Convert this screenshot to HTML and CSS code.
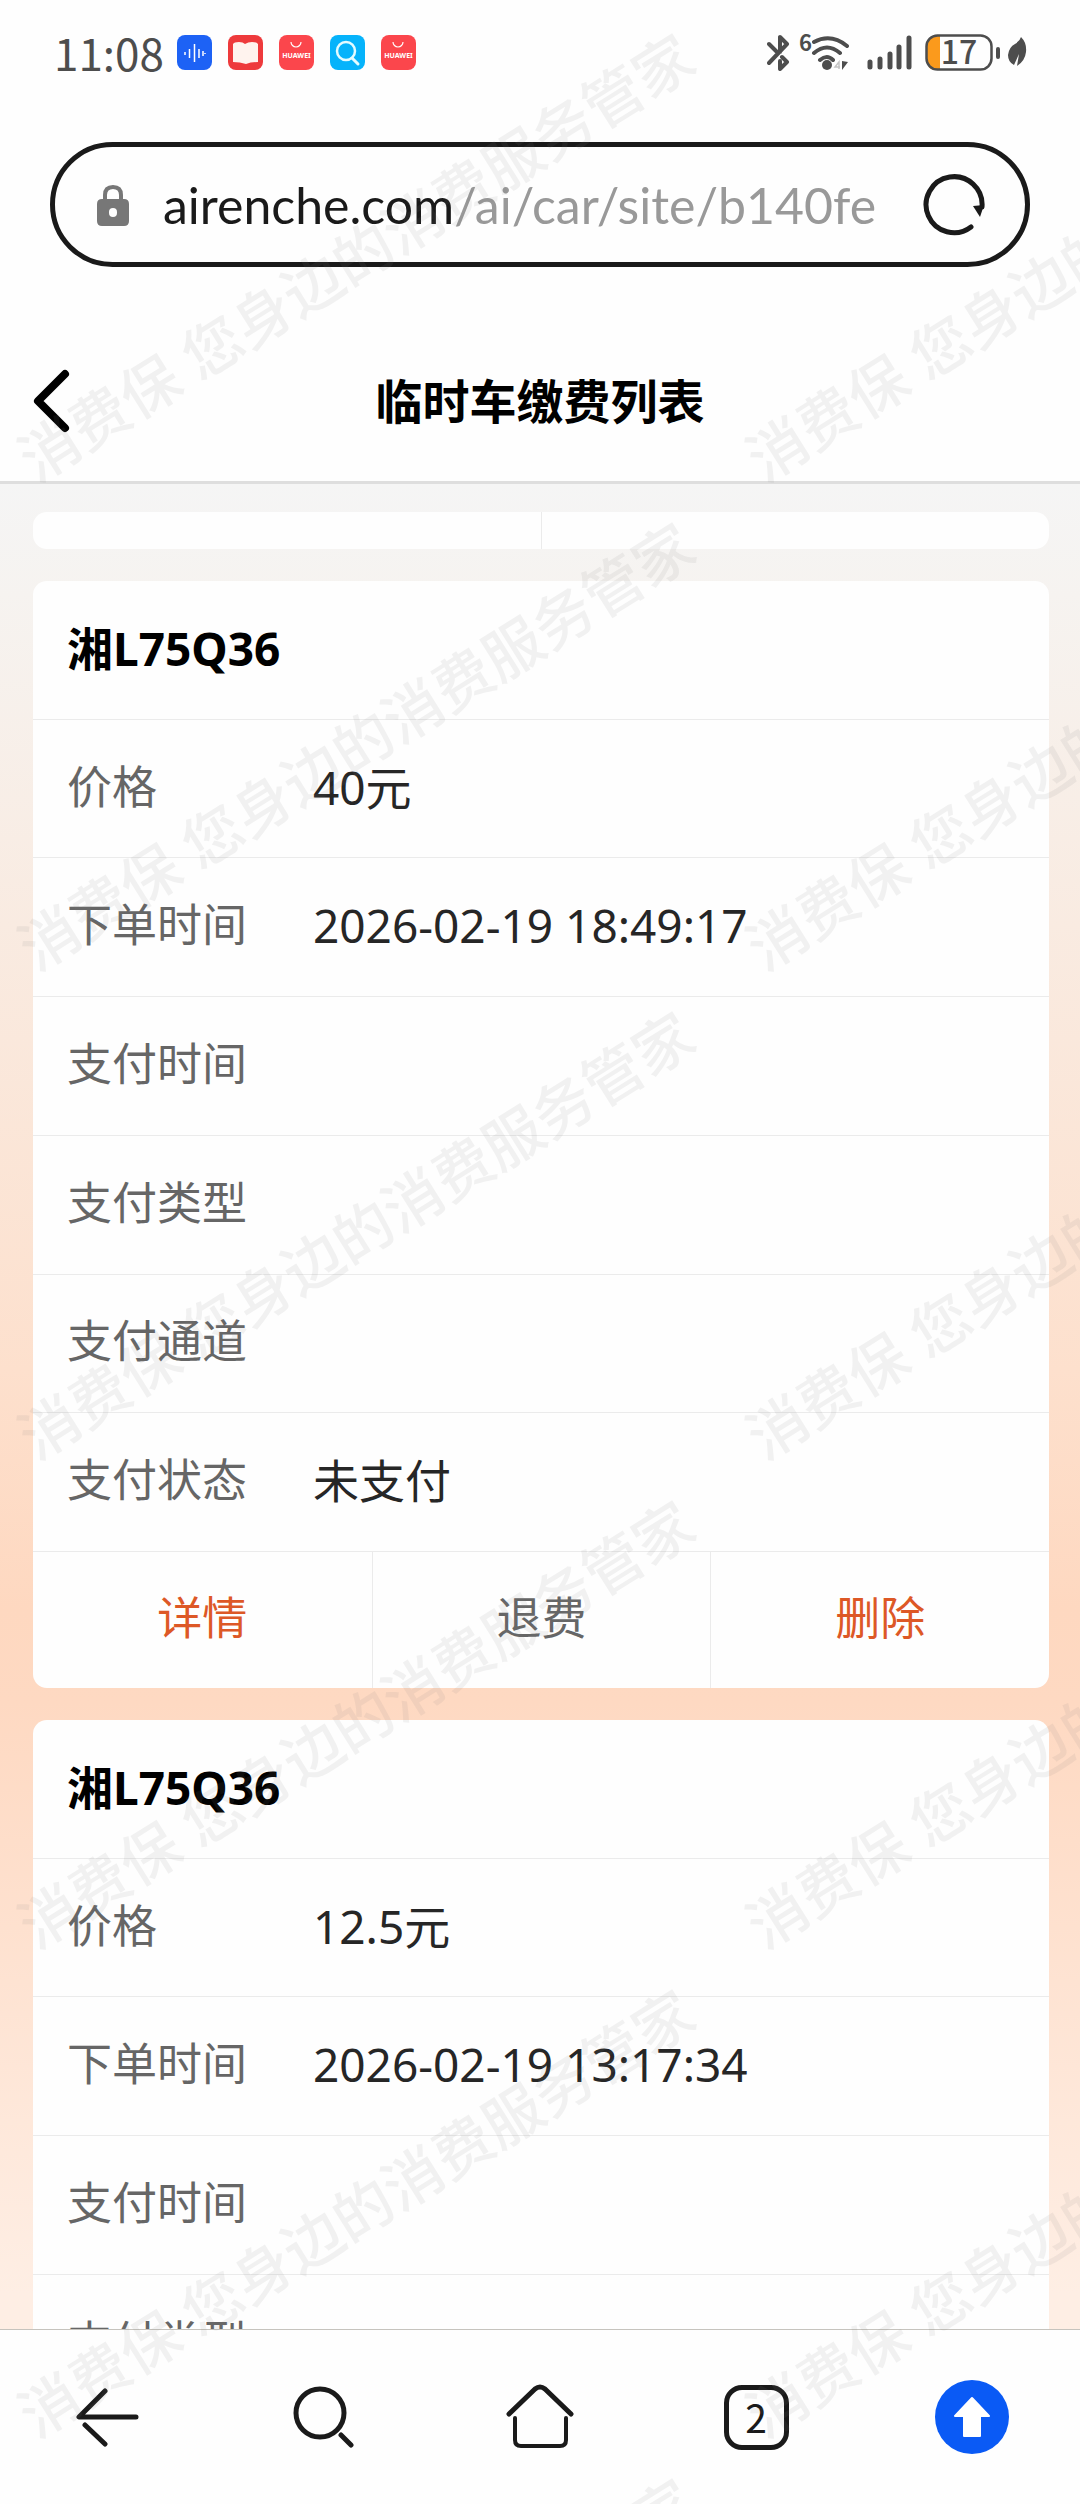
FILE: index.html
```html
<!DOCTYPE html>
<html lang="zh-CN">
<head>
    <meta charset="utf-8">
    <meta name="viewport" content="width=device-width, initial-scale=1">
    <title>临时车缴费列表</title>
    <link rel="stylesheet" href="styles.css">
</head>
<body>
    <div class="status_bar">
        <span class="time">11:08</span>
        <div class="app_icons">
            <svg width="35" height="35" viewBox="0 0 35 35">
                <rect width="35" height="35" rx="8" fill="#1d62f5"/>
                <path d="M8 17v3M12.500 14v9M17.500 9v18M22 14v9M26 16v5M28 18v1" stroke="#fff" stroke-width="1.500"/>
            </svg>
            <svg width="35" height="35" viewBox="0 0 35 35">
                <rect width="35" height="35" rx="8" fill="#ee3a3c"/>
                <path d="M5 9q1-2 6-2 4 0 6 2 3-2 7-2 5 0 6 2v18q-7 0-12 2-6-2-13-2z" fill="#fff3ee"/>
            </svg>
            <svg width="35" height="35" viewBox="0 0 35 35">
                <rect width="35" height="35" rx="8" fill="#fb464c"/>
                <path d="M12 7a5 5 0 0 0 10 0" fill="none" stroke="#fff" stroke-width="1.200"/>
                <text class="app_text" x="17.500" y="23" text-anchor="middle">HUAWEI</text>
            </svg>
            <svg width="35" height="35" viewBox="0 0 35 35">
                <rect width="35" height="35" rx="8" fill="#06b3fb"/>
                <circle cx="16" cy="16" r="9" fill="none" stroke="#e4fbff" stroke-width="2.500"/>
                <path d="M22 23l6 6" stroke="#e4fbff" stroke-width="3" stroke-linecap="round"/>
            </svg>
            <svg width="35" height="35" viewBox="0 0 35 35">
                <rect width="35" height="35" rx="8" fill="#fb464c"/>
                <path d="M12 7a5 5 0 0 0 10 0" fill="none" stroke="#fff" stroke-width="1.200"/>
                <text class="app_text" x="17.500" y="23" text-anchor="middle">HUAWEI</text>
            </svg>
        </div>
        <div class="system_icons">
            <svg width="24" height="37" viewBox="0 0 24 37" fill="none" stroke="#4d4d4d" stroke-width="4" stroke-linecap="round" stroke-linejoin="round">
                <path d="M2 10l8 8M2 29L20 10l-7-7v15M15 23l5 5-7 7v-8"/>
            </svg>
            <svg width="56" height="37" viewBox="0 0 56 37">
                <text class="wifi_text" x="0" y="17">6</text>
                <path d="M15 8q17-9 33 4M15 19q13-11 26 0M21 26q7-6 13 0" fill="none" stroke="#4d4d4d" stroke-width="4" stroke-linecap="round"/>
                <circle cx="28" cy="31" r="5" fill="#4d4d4d"/>
                <path d="M43 27v9l6-8z" fill="#4d4d4d"/>
                <path d="M40 35v-7l-4 5h5" fill="none" stroke="#c4c4c4" stroke-width="1.500"/>
            </svg>
            <svg width="54" height="37" viewBox="0 0 54 37" stroke="#4d4d4d" stroke-width="5" stroke-linecap="round">
                <path d="M7 28v5M17 25v8M27 20v13M36 13v20M46 4v29"/>
            </svg>
            <svg width="75" height="37" viewBox="0 0 75 37">
                <path d="M15 2v34h-4q-9 0-9-10V12q0-10 9-10z" fill="#fb9a1c"/>
                <rect x="1.500" y="1.500" width="65" height="34" rx="11" fill="none" stroke="#4d4d4d" stroke-width="2.500"/>
                <path d="M73 15v8" stroke="#4d4d4d" stroke-width="4" stroke-linecap="round"/>
                <text class="battery_text" x="34" y="30" text-anchor="middle">17</text>
            </svg>
            <svg width="20" height="30" viewBox="0 0 20 30">
                <path d="M13 0Q19 6 18 15t-9 14l2-12-5 11Q0 25 0 18q1-8 7-11 5-3 6-7z" fill="#4d4d4d"/>
            </svg>
        </div>
    </div>

    <div class="address_bar">
        <svg width="32" height="42" viewBox="0 0 32 42">
            <path d="M8 18v-7q0-8 8-8t8 8v7" fill="none" stroke="#777" stroke-width="4"/>
            <path d="M5 15h22q5 0 5 5v17q0 5-5 5H5q-5 0-5-5V20q0-5 5-5zm11 9a4 4 0 0 0-4 4v1a4 4 0 0 0 8 0v-1a4 4 0 0 0-4-4z" fill="#777" fill-rule="evenodd"/>
        </svg>
        <button class="url" type="button">airenche.com<span class="url_path">/ai/car/site/b140fe</span></button>
        <button class="reload" type="button" aria-label="刷新">
            <svg width="62" height="62" viewBox="0 0 62 62">
                <path d="M48 53A28 28 0 1 1 59 33" fill="none" stroke="#1a1a1a" stroke-width="5" stroke-linecap="round"/>
                <path d="M50 32l11-1-4 12z" fill="#1a1a1a"/>
            </svg>
        </button>
    </div>

    <header class="page_header">
        <button class="back" type="button" aria-label="返回">
            <svg width="38" height="64" viewBox="0 0 38 64">
                <path d="M33 5L6 32l27 27" fill="none" stroke="#000" stroke-width="8" stroke-linecap="round" stroke-linejoin="round"/>
            </svg>
        </button>
        <h1>临时车缴费列表</h1>
    </header>

    <main class="list">
        <div class="card_end">
            <span></span>
            <span></span>
        </div>

        <section class="card">
            <h2>湘L75Q36</h2>
            <dl>
                <div class="row"><dt>价格</dt><dd>40元</dd></div>
                <div class="row"><dt>下单时间</dt><dd>2026-02-19 18:49:17</dd></div>
                <div class="row"><dt>支付时间</dt><dd></dd></div>
                <div class="row"><dt>支付类型</dt><dd></dd></div>
                <div class="row"><dt>支付通道</dt><dd></dd></div>
                <div class="row"><dt>支付状态</dt><dd>未支付</dd></div>
            </dl>
            <div class="actions">
                <button class="accent" type="button">详情</button>
                <button type="button">退费</button>
                <button class="accent" type="button">删除</button>
            </div>
        </section>

        <section class="card">
            <h2>湘L75Q36</h2>
            <dl>
                <div class="row"><dt>价格</dt><dd>12.5元</dd></div>
                <div class="row"><dt>下单时间</dt><dd>2026-02-19 13:17:34</dd></div>
                <div class="row"><dt>支付时间</dt><dd></dd></div>
                <div class="row"><dt>支付类型</dt><dd></dd></div>
            </dl>
        </section>
    </main>

    <nav class="bottom_nav">
        <button type="button" aria-label="后退">
            <svg width="64" height="60" viewBox="0 0 64 60" fill="none" stroke="#1a1a1a" stroke-width="5" stroke-linecap="round" stroke-linejoin="round">
                <path d="M29 4L3 30h57"/>
                <path d="M9 38l20 19"/>
            </svg>
        </button>
        <button type="button" aria-label="搜索">
            <svg width="62" height="62" viewBox="0 0 62 62" fill="none" stroke="#1a1a1a" stroke-width="5" stroke-linecap="round">
                <circle cx="27" cy="27" r="24"/>
                <path d="M48 49l10 10"/>
            </svg>
        </button>
        <button type="button" aria-label="主页">
            <svg width="68" height="66" viewBox="0 0 68 66" fill="none" stroke="#1a1a1a" stroke-width="5" stroke-linecap="round" stroke-linejoin="round">
                <path d="M3 30L29 5q5-4 10 0l26 25"/>
                <path d="M9 34v22q0 6 6 6h39q6 0 6-6V34" stroke-width="4"/>
            </svg>
        </button>
        <button type="button" aria-label="标签页">
            <span class="tab_count">2</span>
        </button>
        <button type="button" aria-label="回到顶部">
            <svg width="74" height="74" viewBox="0 0 74 74">
                <circle cx="37" cy="37" r="37" fill="#0a5af5"/>
                <path d="M37 18l17 18H45v20H29V36H20z" fill="#fff" stroke="#fff" stroke-width="2" stroke-linejoin="round"/>
            </svg>
        </button>
    </nav>

    <div class="watermark" aria-hidden="true">
        <span>消费保 您身边的消费服务管家</span>
        <span>消费保 您身边的消费服务管家</span>
        <span>消费保 您身边的消费服务管家</span>
        <span>消费保 您身边的消费服务管家</span>
        <span>消费保 您身边的消费服务管家</span>
        <span>消费保 您身边的消费服务管家</span>
        <span>消费保 您身边的消费服务管家</span>
        <span>消费保 您身边的消费服务管家</span>
        <span>消费保 您身边的消费服务管家</span>
        <span>消费保 您身边的消费服务管家</span>
        <span>消费保 您身边的消费服务管家</span>
        <span>消费保 您身边的消费服务管家</span>
    </div>
</body>
</html>
```
FILE: styles.css
```css
* {
    box-sizing: border-box;
}

body {
    display: flex;
    flex-direction: column;
    height: 100vh;
    margin: 0;
    overflow: hidden;
    background-color: #fefefe;
    font-family: "Noto Sans", "Noto Sans CJK SC", sans-serif;
    color: #000;
}

h1, h2, dl, dd {
    margin: 0;
}

svg {
    display: block;
    flex-shrink: 0;
}

button {
    border: none;
    padding: 0;
    background: none;
    font-family: inherit;
    color: inherit;
    cursor: pointer;
}

.status_bar {
    display: flex;
    align-items: center;
    flex-shrink: 0;
    height: 104px;
    padding: 0 52px 0 54px;
}

.time {
    width: 123px;
    font-family: "Noto Sans CJK SC", sans-serif;
    font-size: 44px;
    line-height: 56px;
    color: #4d4d4d;
}

.app_icons {
    display: flex;
    gap: 16px;
}

.app_text {
    font-family: "Noto Sans", sans-serif;
    font-size: 7px;
    font-weight: bold;
    fill: #fff;
}

.system_icons {
    display: flex;
    align-items: center;
    gap: 8px;
    margin-left: auto;
}

.wifi_text, .battery_text {
    font-family: "Noto Sans CJK SC", sans-serif;
    font-weight: 500;
    fill: #4d4d4d;
}

.wifi_text {
    font-size: 22px;
    font-weight: bold;
}

.battery_text {
    font-size: 32px;
}

.address_bar {
    display: flex;
    align-items: center;
    flex-shrink: 0;
    height: 125px;
    margin: 38px 50px 0;
    padding: 0 40px 0 42px;
    border: 5px solid #1a1a1a;
    border-radius: 63px;
}

.url {
    flex: 1;
    min-width: 0;
    margin: 0 44px 0 34px;
    overflow: hidden;
    white-space: nowrap;
    text-align: left;
    font-family: Lato, sans-serif;
    font-size: 50px;
    line-height: 64px;
    color: #1a1a1a;
}

.url_path {
    color: #999;
}

.page_header {
    display: grid;
    grid-template-columns: 70px 1fr 70px;
    align-items: center;
    flex-shrink: 0;
    height: 217px;
    padding-top: 54px;
    border-bottom: 3px solid #dedede;
}

.back {
    justify-self: end;
}

h1 {
    text-align: center;
    font-size: 47px;
    line-height: 64px;
}

.list {
    display: flex;
    flex-direction: column;
    flex: 1;
    gap: 32px;
    min-height: 0;
    overflow: hidden;
    padding: 28px 31px 0 33px;
    background: linear-gradient(#f5f5f5 0%, #f6f3f0 6%, #fde0cd 48%, #fed8c0 61%, #fed9c2 66%, #feeee4 98%);
}

.card_end {
    display: grid;
    grid-template-columns: 1fr 1fr;
    flex-shrink: 0;
    height: 37px;
    border-radius: 14px;
    background-color: #fefefe;
}

.card_end span + span, .actions button + button {
    border-left: 1px solid #ebebeb;
}

.card {
    display: grid;
    grid-template-rows: repeat(7, 1fr) 136px;
    flex-shrink: 0;
    min-height: 1107px;
    border-radius: 14px;
    background-color: #fefefe;
}

.card dl {
    display: contents;
}

h2, .row {
    display: flex;
    align-items: center;
    padding: 0 34px 4px;
    border-bottom: 1px solid #ebebeb;
    line-height: 64px;
}

h2, dd {
    font-size: 46px;
}

dt {
    flex: 0 0 246px;
    font-size: 45px;
    color: #666;
}

dd {
    color: #262626;
}

.actions {
    display: grid;
    grid-template-columns: repeat(3, 1fr);
}

.actions button {
    padding-bottom: 4px;
    font-size: 45px;
    line-height: 64px;
    color: #666;
}

.actions .accent {
    color: #dd5826;
}

.bottom_nav {
    display: flex;
    flex-shrink: 0;
    height: 175px;
    border-top: 1px solid #c6c3bd;
    background-color: #fefefe;
}

.bottom_nav button {
    display: flex;
    flex: 1;
    align-items: center;
    justify-content: center;
}

.tab_count {
    width: 65px;
    height: 65px;
    border: 5px solid #1a1a1a;
    border-radius: 18px;
    text-align: center;
    font-family: "Noto Sans CJK SC", sans-serif;
    font-size: 39px;
    line-height: 53px;
    color: #1a1a1a;
}

.watermark {
    display: grid;
    grid-template-columns: repeat(2, 728px);
    grid-auto-rows: 489px;
    position: fixed;
    inset: 0;
    overflow: hidden;
    padding: 434px 0 0 24px;
    pointer-events: none;
    font-size: 59px;
    font-weight: 500;
    line-height: 60px;
    color: rgba(128, 128, 128, 0.1);
}

.watermark span {
    height: 60px;
    white-space: nowrap;
    transform: rotate(-32deg);
    transform-origin: 0 50%;
}
```
